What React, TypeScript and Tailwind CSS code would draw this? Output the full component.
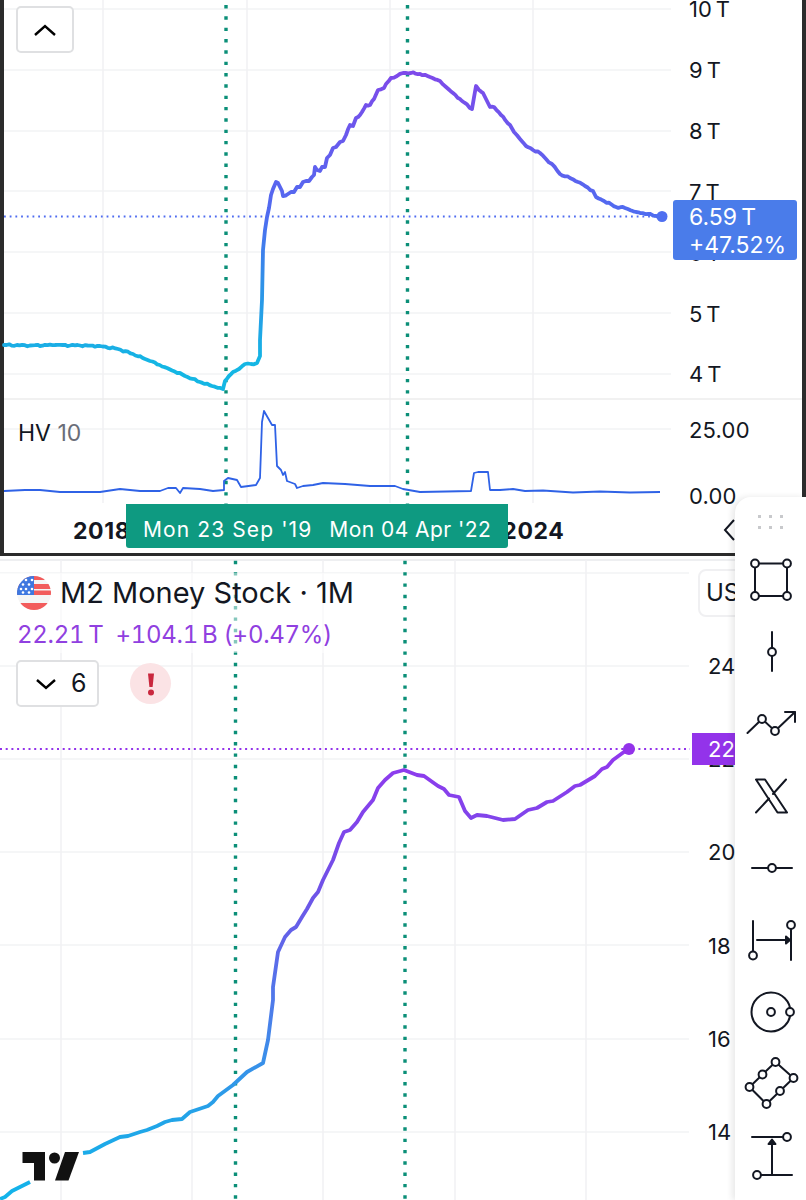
const topLine =
  "M4 345 L30 345.5 L55 345 L80 345.5 L100 346 L118 349 L133 354 L150 361 L167 368 L185 376 L200 382 L212 386 L223 389 L225 381 L229 376 L233 372 L239 369 L245 364 L251 364 L257 363 L260 356 L260 340 L262 300 L263 250 L265 230 L267 217 L269 208 L271 195 L273 189 L276 182 L278 183 L280 187 L282 191 L283 196 L288 194 L291 192 L294 192 L297 187 L300 187 L303 182 L306 181 L309 181 L312 177 L314 175 L315 167 L317 170 L320 171 L322 167 L325 167 L327 158 L330 155 L333 148 L336 147 L340 142 L343 141 L346 135 L350 125 L353 126 L356 118 L360 115 L362 112 L366 105 L370 105 L374 99 L378 90 L384 88 L386 84 L391 78 L397 76 L403 73 L411 73 L420 74 L430 77 L440 81 L446 87 L453 93 L462 101 L472 109 L476 86 L479 90 L483 93 L486 99 L490 107 L494 107 L501 115 L510 125 L514 132 L520 139 L526 146 L533 150 L540 153 L546 159 L552 164 L560 174 L570 178 L578 182 L585 186 L593 191 L596 197 L604 201 L616 207 L625 208 L636 212 L648 214 L661 217";

const hvLine =
  "M4 491 L25 490 L40 490 L60 492 L100 492 L120 489 L140 491 L160 491 L168 488 L176 488 L180 493 L183 488 L200 489 L213 491 L224 490 L224 481 L228 478 L237 480 L241 487 L256 485 L260 478 L262 422 L264 411 L268 418 L272 425 L275 425 L277 466 L281 470 L283 475 L285 472 L287 481 L295 484 L297 488 L303 486 L313 485 L323 483 L345 484 L370 486 L395 486 L403 489 L420 492 L446 491.5 L471 491 L474 473 L478 472 L488 472 L490 490 L500 490 L513 489 L525 491 L543 490.5 L573 492.5 L600 491.5 L630 492.5 L660 492";

const bottomLineA = "M0 1199 L5 1197 L12 1191 L20 1187 L30 1182";
const bottomLineB =
  "M83 1153 L90 1152 L105 1144 L120 1137 L128 1136 L140 1132 L147 1130 L157 1126 L165 1122 L172 1120 L182 1119 L190 1112 L208 1106 L213 1102 L218 1096 L233 1085 L247 1072 L263 1063 L268 1040 L273 1000 L273 987 L278 952 L285 937 L291 930 L296 927 L302 917 L307 909 L313 898 L318 892 L323 880 L333 860 L339 843 L344 832 L350 830 L357 822 L363 812 L373 800 L378 788 L385 780 L393 773 L404 770 L417 775 L424 776 L438 786 L444 789 L449 795 L459 797 L465 811 L471 818 L477 815 L487 816 L503 820 L515 819 L528 810 L537 808 L547 802 L553 801 L567 792 L575 786 L580 785 L595 776 L602 769 L607 767 L613 760 L628 749";

function jagged(d: string, amount: number) {
  const pts = d
    .replace(/[ML]/g, "")
    .trim()
    .split(/\s+/)
    .map(Number);
  let out = `M${pts[0]} ${pts[1]}`;
  let n = 0;
  for (let i = 2; i < pts.length; i += 2) {
    const x0 = pts[i - 2];
    const y0 = pts[i - 1];
    const x1 = pts[i];
    const y1 = pts[i + 1];
    const steps = Math.max(1, Math.round((x1 - x0) / 2.5));
    for (let s = 1; s <= steps; s++) {
      n++;
      const t = s / steps;
      const wiggle = s === steps ? 0 : (Math.sin(n * 2.3) + Math.sin(n * 5.1)) * amount;
      out += ` L${(x0 + (x1 - x0) * t).toFixed(1)} ${(y0 + (y1 - y0) * t + wiggle).toFixed(1)}`;
    }
  }
  return out;
}

function TopChart() {
  const hLines = [9, 70, 131, 191, 252, 313, 374, 429];
  const vLines = [103, 247, 390, 533];
  return (
    <svg className="absolute -left-1 top-0 h-[556px] w-[806px]" viewBox="0 0 806 556" fill="none">
      <defs>
        <linearGradient id="topGrad" gradientUnits="userSpaceOnUse" x1="0" y1="73" x2="0" y2="389">
          <stop offset="0" stopColor="#7e4aea" />
          <stop offset="0.45" stopColor="#4f6cf0" />
          <stop offset="0.66" stopColor="#3090e8" />
          <stop offset="0.92" stopColor="#14b6e4" />
          <stop offset="1" stopColor="#14b6e4" />
        </linearGradient>
      </defs>
      {hLines.map((y) => (
        <line key={y} x1="4" x2="671" y1={y} y2={y} stroke="#f2f3f5" strokeWidth="1.5" />
      ))}
      {vLines.map((x) => (
        <line key={x} x1={x} x2={x} y1="0" y2="503" stroke="#f0f1f3" strokeWidth="1.5" />
      ))}
      <line x1="4" x2="802" y1="399" y2="399" stroke="#eceded" strokeWidth="1.5" />
      <line x1="4" x2="660" y1="216.5" y2="216.5" stroke="#4f6cf0" strokeWidth="1.8" strokeDasharray="1.8 3.9" />
      <line x1="226" x2="226" y1="5" y2="504" stroke="#0b8f78" strokeWidth="3.4" strokeDasharray="3.4 7.93" />
      <line x1="407.5" x2="407.5" y1="5" y2="504" stroke="#0b8f78" strokeWidth="3.4" strokeDasharray="3.4 7.93" />
      <path d={hvLine} stroke="#2f62e6" strokeWidth="1.8" strokeLinejoin="round" />
      <path d={jagged(topLine, 0.45)} stroke="url(#topGrad)" strokeWidth="3.8" strokeLinejoin="round" strokeLinecap="round" />
      <circle cx="662" cy="216.5" r="5.5" fill="#4f6ff0" />
    </svg>
  );
}

function BottomChart() {
  const hLines = [573, 666, 759, 852, 945, 1039, 1132];
  const vLines = [61, 192, 323, 455, 586];
  return (
    <svg className="absolute left-0 top-0 h-[644px] w-[806px]" viewBox="0 556 806 644" fill="none">
      <defs>
        <linearGradient id="botGrad" gradientUnits="userSpaceOnUse" x1="0" y1="749" x2="0" y2="1199">
          <stop offset="0" stopColor="#9238ee" />
          <stop offset="0.3" stopColor="#7150e8" />
          <stop offset="0.6" stopColor="#4a80ea" />
          <stop offset="0.82" stopColor="#22a4e8" />
          <stop offset="1" stopColor="#12b4ea" />
        </linearGradient>
      </defs>
      <line x1="0" x2="735" y1="560" y2="560" stroke="#eeeff1" strokeWidth="2" />
      {hLines.map((y) => (
        <line key={y} x1="0" x2="689" y1={y} y2={y} stroke="#f2f3f5" strokeWidth="1.5" />
      ))}
      {vLines.map((x) => (
        <line key={x} x1={x} x2={x} y1="560" y2="1200" stroke="#f0f1f3" strokeWidth="1.5" />
      ))}
      <line x1="0" x2="690" y1="749" y2="749" stroke="#9333ea" strokeWidth="2" strokeDasharray="2 3.7" />
      <line x1="235.5" x2="235.5" y1="560.8" y2="1200" stroke="#0b8f78" strokeWidth="3.4" strokeDasharray="3.4 7.93" />
      <line x1="405" x2="405" y1="560.8" y2="1200" stroke="#0b8f78" strokeWidth="3.4" strokeDasharray="3.4 7.93" />
      <path d={bottomLineA} stroke="url(#botGrad)" strokeWidth="3.8" strokeLinejoin="round" />
      <path d={bottomLineB} stroke="url(#botGrad)" strokeWidth="3.8" strokeLinejoin="round" />
      <circle cx="629" cy="749" r="6" fill="#9333ea" />
      {/* tradingview mark */}
      <path d="M22.5 1152H45V1180.5H34V1163H22.5Z" fill="#111" />
      <circle cx="54.5" cy="1158" r="5.5" fill="#111" />
      <path d="M65 1152H79L68.5 1180.5H55Z" fill="#111" />
    </svg>
  );
}

function Flag() {
  return (
    <svg width="34" height="34" viewBox="0 0 34 34" className="shrink-0">
      <defs>
        <clipPath id="flagClip">
          <circle cx="17" cy="17" r="17" />
        </clipPath>
      </defs>
      <g clipPath="url(#flagClip)">
        <rect width="34" height="34" fill="#f5f5f5" />
        <rect x="0" y="0" width="34" height="4" fill="#f25c5c" />
        <rect x="0" y="8" width="34" height="5" fill="#f25c5c" />
        <rect x="0" y="14.5" width="34" height="4.5" fill="#f25c5c" />
        <rect x="0" y="27" width="34" height="7" fill="#f25c5c" />
        <rect x="0" y="0" width="17" height="19" fill="#3f78e0" />
        {[
          [9, 4],
          [15, 4],
          [6, 8.5],
          [12, 8.5],
          [4, 13],
          [9, 13],
          [15, 13],
          [6, 16.5],
          [12, 16.5],
        ].map(([x, y]) => (
          <circle key={`${x}-${y}`} cx={x} cy={y} r="1.3" fill="#fff" />
        ))}
      </g>
    </svg>
  );
}

// toolbar icons, each drawn in a 56x48 box centered on the toolbar
function ToolIcon({ children }: { children: React.ReactNode }) {
  return (
    <svg
      className="overflow-visible"
      width="56"
      height="48"
      viewBox="0 0 56 48"
      fill="none"
      stroke="#131722"
      strokeWidth="2"
      strokeLinecap="round"
      strokeLinejoin="round"
    >
      {children}
    </svg>
  );
}

const dot = { fill: "#fff", r: "3.9" };

const tools = [
  <ToolIcon key="rect">
    <path d="M12 7.5H44M12 7.5V40M44 7.5V40M12 40H44" />
    <circle cx="12" cy="7.5" {...dot} />
    <circle cx="44" cy="7.5" {...dot} />
    <circle cx="12" cy="40" {...dot} />
    <circle cx="44" cy="40" {...dot} />
  </ToolIcon>,
  <ToolIcon key="vline">
    <path d="M29 4V43" />
    <circle cx="29" cy="24" {...dot} />
  </ToolIcon>,
  <ToolIcon key="trend">
    <path d="M4.5 33L19 19L32 31L52 12M42 12H52V22" />
    <circle cx="19" cy="19" {...dot} />
    <circle cx="32" cy="31" {...dot} />
  </ToolIcon>,
  <ToolIcon key="x">
    <path d="M13 7.5H22L44 40.5H34.5ZM43 7.5L30 22M26 26.5L13 40.5" />
  </ToolIcon>,
  <ToolIcon key="ray">
    <path d="M9 24H49" />
    <circle cx="29" cy="24" {...dot} />
  </ToolIcon>,
  <ToolIcon key="dates">
    <path d="M10 5V36M48 13V44M14 24H43" />
    <path d="M43 20.5L47 24L43 27.5Z" fill="#131722" />
    <circle cx="10" cy="39.5" {...dot} />
    <circle cx="48" cy="9" {...dot} />
  </ToolIcon>,
  <ToolIcon key="circle">
    <circle cx="28" cy="24" r="19.5" />
    <circle cx="28" cy="24" {...dot} />
    <circle cx="47" cy="24" {...dot} />
  </ToolIcon>,
  <ToolIcon key="rotated">
    <path d="M6.5 27L32.5 2L50.5 18L23.5 44Z" />
    <circle cx="6.5" cy="27" {...dot} />
    <circle cx="19.5" cy="14.5" {...dot} />
    <circle cx="32.5" cy="2" {...dot} />
    <circle cx="50.5" cy="18" {...dot} />
    <circle cx="37" cy="31" {...dot} />
    <circle cx="23.5" cy="44" {...dot} />
  </ToolIcon>,
  <ToolIcon key="prices">
    <path d="M9 5H44M14 43H49M29 43V12" />
    <path d="M25.5 12L29 7.5L32.5 12Z" fill="#131722" />
    <circle cx="44" cy="5" {...dot} />
    <circle cx="14" cy="43" {...dot} />
  </ToolIcon>,
];

function Toolbar() {
  return (
    <aside className="absolute right-0 top-[497px] flex h-[703px] w-[71px] flex-col items-center rounded-tl-[16px] bg-white shadow-[-3px_0_6px_rgba(0,0,0,0.09)]">
      <div className="mb-[15px] mt-[18px] grid grid-cols-3 gap-x-[8px] gap-y-[8px]">
        {[0, 1, 2, 3, 4, 5].map((i) => (
          <span key={i} className="h-[3px] w-[3px] bg-[#c8c9cc]" />
        ))}
      </div>
      {tools.map((t, i) => (
        <div key={i} className="flex h-[72px] shrink-0 items-center justify-center">
          {t}
        </div>
      ))}
    </aside>
  );
}

export default function App() {
  const prices = ["10\u2009T", "9\u2009T", "8\u2009T", "7\u2009T", "6\u2009T", "5\u2009T", "4\u2009T"];
  const priceRows = ["24", "22", "20", "18", "16", "14"];
  return (
    <div className="relative h-[1200px] w-[806px] overflow-hidden bg-white font-['Inter',sans-serif] text-[#131722]">
      <section className="relative h-[556px] border-x-4 border-b-[3px] border-x-[#2b2b2b] border-b-[#2b2b2b]">
        <TopChart />
        <div className="relative flex h-[399px] overflow-hidden">
          <div className="flex-1 pl-3 pt-[6px]">
            <button className="flex h-[47px] w-[58px] items-center justify-center rounded-[5px] border-2 border-[#dfe0e2] bg-white">
              <svg width="24" height="14" viewBox="0 0 24 14" fill="none" stroke="#000" strokeWidth="2.4">
                <path d="M2 12L12 3L22 12" />
              </svg>
            </button>
          </div>
          <div className="-mt-[20.5px] w-[113px] shrink-0 text-[22px]">
            {prices.map((p) => (
              <div key={p} className="flex h-[60.83px] items-center">
                {p}
              </div>
            ))}
          </div>
        </div>
        <div className="relative flex h-[104px]">
          <div className="flex-1 pl-[14px] pt-[20px] text-[23px] leading-[28px]">
            HV <span className="text-[#6a6d78]">10</span>
          </div>
          <div className="flex w-[113px] shrink-0 flex-col pt-[17px] text-[22px] leading-[28px] tracking-[0.2px]">
            <span>25.00</span>
            <span className="mt-[38px]">0.00</span>
          </div>
        </div>
        <div className="relative flex h-[50px] items-center pl-[69px] pt-[6px] text-[23px] font-bold tracking-[0.6px]">
          <span>2018</span>
          <span className="ml-[372px]">2024</span>
          <svg className="absolute left-[718px] top-[15px]" width="14" height="24" viewBox="0 0 14 24" fill="none" stroke="#131722" strokeWidth="2">
            <path d="M12 2L3 12L12 22" />
          </svg>
          <div className="absolute left-[122px] top-[1px] flex h-[44px] w-[382px] items-center gap-[17px] rounded-b-[3px] bg-[#0e9a81] pl-[17px] pt-[7px] text-[21px] font-normal text-white">
            <span className="tracking-[1.1px]">Mon 23 Sep '19</span>
            <span className="tracking-[0.45px]">Mon 04 Apr '22</span>
          </div>
        </div>
        <div className="absolute left-[669px] top-[200px] w-[124px] rounded-[3px] bg-[#4a7cea] pb-[1px] pl-[16px] pt-[3px] text-[23px] leading-[28px] text-white">
          <div>6.59{"\u2009"}T</div>
          <div>+47.52%</div>
        </div>
      </section>

      <section className="relative h-[644px]">
        <BottomChart />
        <div className="relative pt-[17px]">
          <div className="h-[80px] w-[360px] bg-white/50 pl-[17px] pt-[3px]">
            <div className="flex items-center gap-[9px]">
              <Flag />
              <h1 className="text-[29px] leading-[34px]">M2 Money Stock · 1M</h1>
            </div>
            <p className="mt-[10px] flex gap-[12px] text-[24px] leading-[30px] tracking-[-0.3px] text-[#9040e0] tabular-nums">
              <span>22.21{"\u2009"}T</span>
              <span>+104.1{"\u2009"}B (+0.47%)</span>
            </p>
          </div>
          <div className="mt-[7px] flex items-center gap-[31px] pl-[16px]">
            <button className="flex h-[47px] w-[83px] items-center gap-[14px] rounded-[5px] border-2 border-[#dfe0e2] bg-white pl-[17px] text-[25px]">
              <svg width="22" height="12" viewBox="0 0 22 12" fill="none" stroke="#000" strokeWidth="2.4">
                <path d="M2 2L11 10L20 2" />
              </svg>
              6
            </button>
            <div className="flex h-[41px] w-[41px] items-center justify-center rounded-full bg-[#fbe3e5]">
              <svg width="10" height="24" viewBox="0 0 10 24">
                <path d="M2 1.5H8L6.6 15H3.4Z" fill="#c9283e" />
                <circle cx="5" cy="20.5" r="3" fill="#c9283e" />
              </svg>
            </div>
          </div>
        </div>
        <div className="absolute left-[698px] top-[13px] flex h-[48px] w-[60px] items-center rounded-[8px] border-2 border-[#f0f0f2] bg-white pl-[6px] text-[24px]">
          USD
        </div>
        <div className="absolute left-[708px] top-[64px] text-[22px]">
          {priceRows.map((p) => (
            <div key={p} className="flex h-[93.2px] items-center">
              {p}
            </div>
          ))}
        </div>
        <div className="absolute left-[692px] top-[177px] flex h-[32px] w-[60px] items-center bg-[#9333ea] pl-[16px] text-[22px] text-white">
          22.21
        </div>
      </section>

      <Toolbar />
    </div>
  );
}
